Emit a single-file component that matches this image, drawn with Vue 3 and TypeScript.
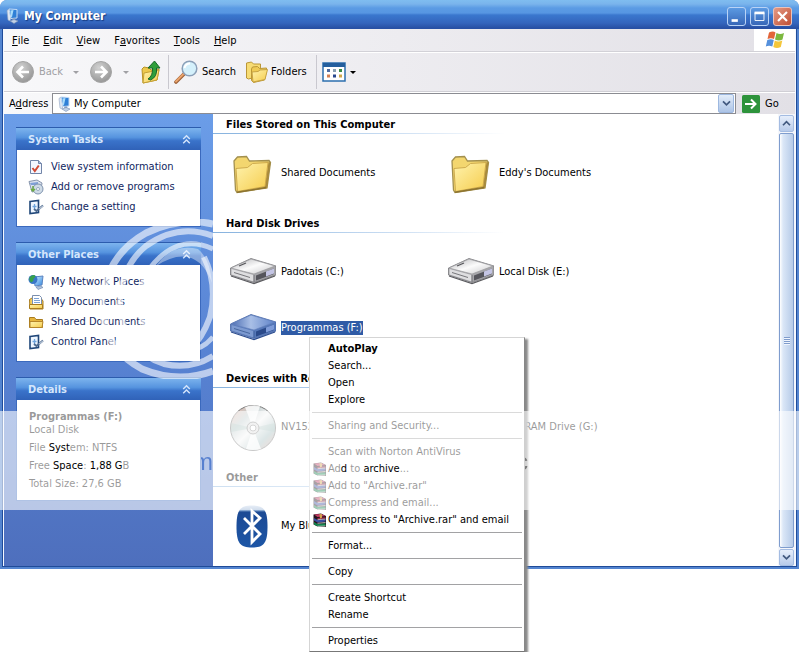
<script setup lang="ts">
import { ref } from 'vue'

interface Run { text: string; clear?: boolean }
interface TaskLink { label: string; icon: string }
interface TaskBox { title: string; links: TaskLink[] }
interface DriveItem { label: string; icon: string; selected?: boolean }
interface Group { title: string; items: DriveItem[] }
interface MenuEntry { runs: Run[]; bold?: boolean; icon?: boolean }

const menus = [
  ['', 'F', 'ile'],
  ['', 'E', 'dit'],
  ['', 'V', 'iew'],
  ['F', 'a', 'vorites'],
  ['', 'T', 'ools'],
  ['', 'H', 'elp'],
]

const address = ref('My Computer')

const boxes: TaskBox[] = [
  {
    title: 'System Tasks',
    links: [
      { label: 'View system information', icon: 'sysinfo' },
      { label: 'Add or remove programs', icon: 'programs' },
      { label: 'Change a setting', icon: 'panel' },
    ],
  },
  {
    title: 'Other Places',
    links: [
      { label: 'My Network Places', icon: 'network' },
      { label: 'My Documents', icon: 'mydocs' },
      { label: 'Shared Documents', icon: 'smallfolder' },
      { label: 'Control Panel', icon: 'panel' },
    ],
  },
]

const details: Run[][] = [
  [{ text: 'File ' }, { text: 'Syst', clear: true }, { text: 'em: NTFS' }],
  [{ text: 'Free ' }, { text: 'Space', clear: true }, { text: ': ' }, { text: '1,88 G', clear: true }, { text: 'B' }],
  [{ text: 'Total Size: 27,6 GB' }],
]

const groups: Group[] = [
  {
    title: 'Files Stored on This Computer',
    items: [
      { label: 'Shared Documents', icon: 'folder' },
      { label: "Eddy's Documents", icon: 'folder' },
    ],
  },
  {
    title: 'Hard Disk Drives',
    items: [
      { label: 'Padotais (C:)', icon: 'disk' },
      { label: 'Local Disk (E:)', icon: 'disk' },
      { label: 'Programmas (F:)', icon: 'diskblue', selected: true },
    ],
  },
  {
    title: 'Devices with Removable Storage',
    items: [
      { label: 'NV152 (D:)', icon: 'cd' },
      { label: 'DVD-RAM Drive (G:)', icon: 'cd' },
    ],
  },
  { title: 'Other', items: [{ label: 'My Bluetooth Places', icon: 'bluetooth' }] },
]

const contextMenu: MenuEntry[][] = [
  [
    { runs: [{ text: 'AutoPlay' }], bold: true },
    { runs: [{ text: 'Search...' }] },
    { runs: [{ text: 'Open' }] },
    { runs: [{ text: 'Explore' }] },
  ],
  [{ runs: [{ text: 'Sharing and Security...' }] }],
  [
    { runs: [{ text: 'Scan with Norton AntiVirus' }] },
    {
      runs: [{ text: 'Ad' }, { text: 'd', clear: true }, { text: ' to ' }, { text: 'archive', clear: true }, { text: '...' }],
      icon: true,
    },
    { runs: [{ text: 'Add to "Archive.rar"' }], icon: true },
    { runs: [{ text: 'Compress and email...' }], icon: true },
    { runs: [{ text: 'Compress to "Archive.rar" and email' }], icon: true },
  ],
  [{ runs: [{ text: 'Format...' }] }],
  [{ runs: [{ text: 'Copy' }] }],
  [{ runs: [{ text: 'Create Shortcut' }] }, { runs: [{ text: 'Rename' }] }],
  [{ runs: [{ text: 'Properties' }] }],
]
</script>

<template>
  <div class="desktop">
    <svg class="defs" width="0" height="0" aria-hidden="true">
      <defs>
        <linearGradient id="gy" x1="0" y1="0" x2="1" y2="1">
          <stop offset="0" stop-color="#fff3ae" /><stop offset="1" stop-color="#f5cc4c" />
        </linearGradient>
        <linearGradient id="gs" x1="0" y1="0" x2="1" y2="1">
          <stop offset="0" stop-color="#d8f1ff" /><stop offset="1" stop-color="#2f86e0" />
        </linearGradient>
        <linearGradient id="gt" x1="0" y1="0" x2="1" y2="1">
          <stop offset="0" stop-color="#b4b4b8" /><stop offset=".5" stop-color="#fbfbfb" /><stop offset="1" stop-color="#c9c9cc" />
        </linearGradient>
        <linearGradient id="gb" x1="0" y1="0" x2="1" y2="0">
          <stop offset="0" stop-color="#4a6cb2" /><stop offset=".45" stop-color="#a9bfe6" /><stop offset="1" stop-color="#5f83c9" />
        </linearGradient>
        <linearGradient id="gc" x1="0" y1="0" x2="1" y2="1">
          <stop offset="0" stop-color="#f0b5a4" /><stop offset=".3" stop-color="#c3cfd0" /><stop offset=".5" stop-color="#f4f4f4" />
          <stop offset=".75" stop-color="#a8c0c2" /><stop offset="1" stop-color="#e3a797" />
        </linearGradient>
        <radialGradient id="gg" cx=".4" cy=".3" r=".8">
          <stop offset="0" stop-color="#d2d2d2" /><stop offset="1" stop-color="#8f8f8f" />
        </radialGradient>
        <linearGradient id="gbt" x1="0" y1="0" x2="0" y2="1">
          <stop offset="0" stop-color="#c3d4ea" /><stop offset=".13" stop-color="#7fa0cc" /><stop offset=".15" stop-color="#1c4a94" /><stop offset="1" stop-color="#1d56a6" />
        </linearGradient>
      </defs>
      <symbol id="pc" viewBox="0 0 16 16">
        <path d="M3 2.500 5 1l2 9-1 3-2-1z" fill="#dde6f2" stroke="#8ea2c2" stroke-width=".6" />
        <path d="m5 1 8 .5V10l-6 .5z" fill="#2f7fd6" stroke="#c5dcf6" />
        <path d="M6.300 2.500 9.500 2 8 9l-.8.300z" fill="#a8dcfb" />
        <path d="M8.500 10.500h2.500l.5 2H8z" fill="#7f97bd" />
        <path d="m6 13 4-1.500 4 1.500-4 2.500z" fill="#c3d2e6" stroke="#7890b5" stroke-width=".6" />
      </symbol>
      <symbol id="sysinfo" viewBox="0 0 16 16">
        <path d="M2.500 1.500h8l3 3v10h-11z" fill="#f2f6ff" stroke="#7285a8" />
        <path d="M10.500 1.500v3h3" fill="#a9bcdc" stroke="#7285a8" />
        <path d="m4.500 9 2.300 3 4-5.500" fill="none" stroke="#d04a35" stroke-width="2" />
      </symbol>
      <symbol id="programs" viewBox="0 0 16 16">
        <path d="M1 2.500 9 1l5 3-1 7-9 2z" fill="#dbe3ef" stroke="#8795ad" />
        <path d="m2 4 8-1v3H3z" fill="#7f9fd6" />
        <circle cx="10" cy="10" r="5" fill="#cfdbe6" stroke="#7f93ae" />
        <circle cx="10" cy="10" r="1.500" fill="#fff" stroke="#66829f" stroke-width=".6" />
        <path d="M5 7v5m-2-2 2 2 2-2" fill="none" stroke="#6caa46" stroke-width="1.500" />
      </symbol>
      <symbol id="panel" viewBox="0 0 16 16">
        <path d="M2 2.500 10.500 1.500v12L2 14.500z" fill="#eef6ff" stroke="#1f4679" stroke-width="1.600" />
        <path d="M6.500 5v5M4.500 7.500h4" stroke="#6fa5dd" stroke-width="1.300" />
        <path d="m6 10 2.500 2L15 6.500" fill="none" stroke="#4e6a8e" stroke-width="2" />
        <path d="m11 10 4-3" stroke="#b7c4d5" stroke-width="1.200" />
      </symbol>
      <symbol id="network" viewBox="0 0 16 16">
        <path d="m6 3 9-1-1 9-7 1z" fill="url(#gs)" stroke="#5c84c0" />
        <path d="m8 13 5-1 2 1.500-5 2z" fill="#b0c3dd" stroke="#657fa8" stroke-width=".6" />
        <circle cx="5" cy="5.500" r="4.500" fill="#3976c9" />
        <path d="M1.500 3.500q2-3 5-2.500l1 2-2 1.500v2l-2 2q-3-2-2-5z" fill="#37a14a" />
      </symbol>
      <symbol id="mydocs" viewBox="0 0 16 16">
        <path d="M1.500 5.500 4 4l9.500 1 1.500 2v8h-13z" fill="#f4cf5f" stroke="#a97c1f" />
        <path d="M4.500 1.500h7l2 2v8h-9z" fill="#fff" stroke="#7b8fae" />
        <path d="M6 4.500h5m-5 2h6m-6 2h6" stroke="#7ea4d6" />
        <path d="M1.500 10.500h13v4h-13z" fill="url(#gy)" stroke="#a97c1f" />
      </symbol>
      <symbol id="smallfolder" viewBox="0 0 16 16">
        <path d="M1.500 13.500v-10h5l1.500 2h6.500v8z" fill="#e7b53d" stroke="#a97c1f" />
        <path d="M2 13.500v-6h13l-1 6z" fill="url(#gy)" stroke="#b6862a" />
      </symbol>
      <symbol id="folder" viewBox="0 0 48 48">
        <path d="M6 12 9.500 8 18.500 7.500 21.500 12 41 11.500l1.500 2L39 39 9 43.500 7.500 41z" fill="#f3d66f" stroke="#a3904f" stroke-width="1.300" />
        <path d="m40.500 13 2 .5L39 39l-2.500.5z" fill="#a88a3c" />
        <path d="M8 19.500 19.500 18.500 24.500 14.500 40 13.500 37 37.500 9.500 42.500z" fill="url(#gy)" stroke="#c9a547" stroke-width=".9" />
        <path d="M9 43.300 38 38.500" stroke="#8d7430" stroke-width="1.500" />
      </symbol>
      <symbol id="disk" viewBox="0 0 48 48">
        <path d="M2.500 20 23 10.500 48 18v9L26 34.500 2.500 27z" fill="#a6a6aa" stroke="#77777b" stroke-width=".8" />
        <path d="M3 20 23 11 47 18 26 26z" fill="url(#gt)" stroke="#99999c" stroke-width=".7" />
        <path d="m3.500 21 22 6v6.500l-22-7z" fill="#dedee0" /><path d="m6 24.500 16 5" stroke="#77777b" /><path d="M26 27v7" stroke="#66666a" stroke-width=".8" />
        <path d="m28 27.500 18-7v5.500l-18 6.500z" fill="#55555c" /><path d="m38 23.500 8-3v5l-8 3z" fill="#c4c5e4" />
        <path d="m11 18 7-3" stroke="#56565a" stroke-width="1.300" />
        <path d="M3 28 26 35.500 47 28" fill="none" stroke="#5c5c60" stroke-width="1.200" />
      </symbol>
      <symbol id="diskblue" viewBox="0 0 48 48">
        <path d="M2.500 20 23 10.500 48 18v9L26 34.500 2.500 27z" fill="#5678b8" stroke="#4a6aa8" stroke-width=".8" />
        <path d="M3 20 23 11 47 18 26 26z" fill="url(#gb)" stroke="#6583bd" stroke-width=".7" />
        <path d="m3.500 21 22 6v6.500l-22-7z" fill="#7d9ad0" /><path d="m6 24.500 16 5" stroke="#48689f" /><path d="M26 27v7" stroke="#3a5a98" stroke-width=".8" />
        <path d="m28 27.500 18-7v5.500l-18 6.500z" fill="#2b4a8a" /><path d="m38 23.500 8-3v5l-8 3z" fill="#7f9cd8" />
        <path d="M3 28 26 35.500 47 28" fill="none" stroke="#2f4f90" stroke-width="1.200" />
      </symbol>
      <symbol id="cd" viewBox="0 0 48 48">
        <circle cx="25" cy="25" r="22.500" fill="url(#gc)" stroke="#777" />
        <path d="M25 25 17 4q7-3 15-1zM25 25l8 21q-8 2-15 0z" fill="#fff" opacity=".8" />
        <path d="M25 25 3 20v9zM25 25l22-5v9z" fill="#8bb1a9" opacity=".4" />
        <circle cx="25" cy="25" r="6" fill="#dedede" stroke="#888" />
        <circle cx="25" cy="25" r="3" fill="#fff" stroke="#999" />
      </symbol>
      <symbol id="bluetooth" viewBox="0 0 48 48">
        <path d="M24 3.500C36 3.500 39.500 8 39.500 24.500S36 45.500 24 45.500 8.500 41 8.500 24.500 12 3.500 24 3.500z" fill="url(#gbt)" />
        <path d="m16 16 16 16-8 8V9l8 7-16 16" fill="none" stroke="#fff" stroke-width="2.800" />
      </symbol>
      <symbol id="rar" viewBox="0 0 14 14">
        <path d="M.5 1.500 8 .5l5 2.500v11L4.500 13.500.5 11.500z" fill="#26141c" />
        <path d="M1 1.500 8 1l4.500 2L4.500 4z" fill="#c23a64" />
        <path d="m4.500 5 8-.8v1.300l-8 .8z" fill="#a02448" /><path d="m1 5 3.500 2 8-.8v2.300l-8 1L1 7.500z" fill="#3a4ea4" />
        <path d="m1 9 3.500 2 8-.8V13l-8 .3L1 11.500z" fill="#12824c" />
        <path d="m4.500 6.700 8-.7M4.500 10.300l8-.8M4.500 13.300l8-.3" stroke="#e8e8e8" stroke-width=".7" />
        <path d="M6.500 1.200h2.500v3.500l-2 .8z" fill="#d5a64c" />
      </symbol>
    </svg>

    <main class="window">
      <header class="titlebar">
        <svg class="i16"><use href="#pc" /></svg>
        <h1>My Computer</h1>
        <button class="cap" aria-label="Minimize"><svg viewBox="0 0 19 19"><path d="M4 14h7" stroke="#fff" stroke-width="3" /></svg></button>
        <button class="cap" aria-label="Maximize"><svg viewBox="0 0 19 19"><path d="M4.500 5v9h10V5" fill="none" stroke="#fff" /><path d="M4 5.500h11" stroke="#fff" stroke-width="3" /></svg></button>
        <button class="cap close" aria-label="Close"><svg viewBox="0 0 19 19"><path d="m4.500 4.500 10 10m0-10-10 10" stroke="#fff" stroke-width="2.400" /></svg></button>
      </header>

      <div class="frame">
        <nav class="menubar">
          <button v-for="m in menus" :key="m.join('')">{{ m[0] }}<u>{{ m[1] }}</u>{{ m[2] }}</button>
          <span class="flag">
            <svg viewBox="0 0 20 18">
              <path d="M4 1.500Q8-.5 10.500 1.500L9 8Q6 6.500 2.500 8z" fill="#e2653a" />
              <path d="M11.500 2Q15 4 19 2l-1.500 6.500Q14 10.500 10 8.500z" fill="#7cb83e" />
              <path d="M2.300 9Q6 7.500 8.800 9l-1.500 6.500Q4 14 .8 15.500z" fill="#5590dc" />
              <path d="M9.800 9.500q3.500 2 7.500 0L15.800 16q-4 2-7.500 0z" fill="#f4c63a" />
            </svg>
          </span>
        </nav>

        <div class="toolbar">
          <button class="tool dim">
            <svg class="i24" viewBox="0 0 24 24"><circle cx="12" cy="12" r="10.500" fill="url(#gg)" stroke="#a5a5a5" /><path d="M18 12H7m5-5.500L6.500 12l5.500 5.500" fill="none" stroke="#fff" stroke-width="2.600" /></svg>
            Back
          </button>
          <button class="drop dim" aria-label="Back history"></button>
          <button class="tool" aria-label="Forward">
            <svg class="i24" viewBox="0 0 24 24"><circle cx="12" cy="12" r="10.500" fill="url(#gg)" stroke="#a5a5a5" /><path d="M6 12h11m-5-5.500 5.500 5.500-5.500 5.500" fill="none" stroke="#fff" stroke-width="2.600" /></svg>
          </button>
          <button class="drop dim" aria-label="Forward history"></button>
          <button class="tool" aria-label="Up">
            <svg class="i24" viewBox="0 0 24 24">
              <path d="m3 9 2-2 5 1 2 2 8-1-2 11-14 3z" fill="#edc94c" stroke="#b89428" /><path d="m5 13 15-3-2 10-14 3z" fill="url(#gy)" stroke="#c4a034" />
              <path d="M9 19q5-3 4.500-11H9l6.500-7L21 8h-3.500q1 9-6 12z" fill="#2f9e3a" stroke="#17662a" />
            </svg>
          </button>
          <span class="rule"></span>
          <button class="tool">
            <svg class="i24" viewBox="0 0 24 24">
              <path d="m2 22 8-8" stroke="#9a5f36" stroke-width="3.600" stroke-linecap="round" /><path d="m2 21.500 8-8" stroke="#eaa36c" stroke-width="2" stroke-linecap="round" />
              <circle cx="15.500" cy="8.500" r="7.300" fill="#d4f0fb" stroke="#8b9fb8" stroke-width="1.500" /><path d="M10.500 8q1-4.500 5.500-4.500" fill="none" stroke="#fff" stroke-width="2" />
            </svg>
            Search
          </button>
          <button class="tool folders">
            <svg class="i24" viewBox="0 0 24 24">
              <path d="M1.500 18V3l5-1 2 2h7v3l-1 9-11 3z" fill="#f7dc74" stroke="#bb9737" />
              <path d="m6.500 9 1-2 5-.5 2 2 7-.5v3l-2 9-11 2.500-2-2z" fill="#efcb55" stroke="#bb9737" /><path d="m7 12 6-.5 2-1.500 7.500-.5-2.500 10-12 2.500z" fill="url(#gy)" stroke="#c7a343" />
            </svg>
            Folders
          </button>
          <span class="rule"></span>
          <button class="tool views" aria-label="Views">
            <svg class="i24" viewBox="0 0 24 20">
              <path d="M1 1h22v18H1z" fill="#fff" stroke="#2d6fae" stroke-width="1.500" /><path d="M1 1h22v4H1z" fill="#245f9e" />
              <g stroke-width="3"><path d="M5 8.500h3" stroke="#4e6ba0" /><path d="M11 8.500h3" stroke="#8aa1b4" /><path d="M17 8.500h3" stroke="#3b8a44" /><path d="M5 14h3" stroke="#d37f53" /><path d="M11 14h3" stroke="#27468d" /><path d="M17 14h3" stroke="#d0a64b" /></g>
            </svg>
            <span class="drop"></span>
          </button>
        </div>

        <form class="addressbar" @submit.prevent>
          <label for="address">A<u>d</u>dress</label>
          <div class="field">
            <svg class="i16"><use href="#pc" /></svg>
            <input id="address" v-model="address" type="text" />
            <button type="button" class="combo" aria-label="Show addresses"><svg viewBox="0 0 10 8"><path d="m1 1.500 4 4 4-4" fill="none" stroke="#42597f" stroke-width="2" /></svg></button>
          </div>
          <button class="go">
            <svg viewBox="0 0 18 18"><rect width="18" height="18" rx="1.500" fill="#2d933b" /><path d="M3 9h10M9 4.500 13.500 9 9 13.500" fill="none" stroke="#fff" stroke-width="2" /></svg>
            Go
          </button>
        </form>

        <div class="body">
          <aside class="tasks">
            <section v-for="box in boxes" :key="box.title" class="box">
              <h2>{{ box.title }}<svg viewBox="0 0 10 10"><path d="m2 4.500 3-3 3 3M2 8.500l3-3 3 3" fill="none" stroke="#d4e5fc" stroke-width="1.300" /></svg></h2>
              <ul>
                <li v-for="link in box.links" :key="link.label">
                  <a href="#"><svg class="i16"><use :href="'#' + link.icon" /></svg>{{ link.label }}</a>
                </li>
              </ul>
            </section>
            <section class="box">
              <h2>Details<svg viewBox="0 0 10 10"><path d="m2 4.500 3-3 3 3M2 8.500l3-3 3 3" fill="none" stroke="#d4e5fc" stroke-width="1.300" /></svg></h2>
              <div class="details">
                <strong>Programmas (F:)</strong>
                <span>Local Disk</span>
                <p v-for="(line, n) in details" :key="n"><span v-for="(r, k) in line" :key="k" :class="{ clear: r.clear }">{{ r.text }}</span></p>
              </div>
            </section>
          </aside>

          <div class="pane">
            <section v-for="g in groups" :key="g.title">
              <h3>{{ g.title }}</h3>
              <div class="items">
                <a v-for="item in g.items" :key="item.label" href="#" class="item" :class="{ selected: item.selected }">
                  <svg><use :href="'#' + item.icon" /></svg><span>{{ item.label }}</span>
                </a>
              </div>
            </section>
          </div>

          <div class="scroll">
            <button aria-label="Scroll up"><svg viewBox="0 0 10 8"><path d="m1 6 4-4 4 4" fill="none" stroke="#42597f" stroke-width="2" /></svg></button>
            <div class="thumb"><i></i></div>
            <button aria-label="Scroll down"><svg viewBox="0 0 10 8"><path d="m1 1.500 4 4 4-4" fill="none" stroke="#42597f" stroke-width="2" /></svg></button>
          </div>
        </div>
      </div>
    </main>

    <div class="context" role="menu">
      <div v-for="(block, n) in contextMenu" :key="n" class="block">
        <button v-for="(e, k) in block" :key="k" role="menuitem" :class="{ bold: e.bold }">
          <span class="slot"><svg v-if="e.icon"><use href="#rar" /></svg></span>
          <span v-for="(r, j) in e.runs" :key="j" :class="{ clear: r.clear }">{{ r.text }}</span>
        </button>
      </div>
    </div>

    <svg class="rings" viewBox="0 0 113 160" aria-hidden="true">
      <g fill="none" stroke="#fff" stroke-opacity=".6">
        <path d="M113 5Q80-2 46 14 8 35 2 80q-1 48 40 70 36 15 71 2" stroke-width="7" />
        <path d="M113 17Q78 4 46 27 20 48 20 88q4 44 44 57 27 6 49-8" stroke-width="6" />
        <path d="M113 30Q83 16 59 39 33 63 42 101q13 34 46 31 15-2 25-14" stroke-width="5" />
        <path d="M104 38q14 28 6 60-8 22-20 32" stroke-width="6" />
      </g>
      <path d="M56 47Q72 24 98 30q12 10 14 34-8-22-24-26-14-3-32 9z" fill="#fff" fill-opacity=".4" />
    </svg>
    <div class="band" aria-hidden="true"><span class="letter-m">m</span><span class="letter-c">c</span></div>
  </div>
</template>

<style>
body { margin: 0; background: #fff; }
</style>

<style scoped>
* { box-sizing: border-box; }
.desktop { position: relative; min-height: 100vh; overflow: hidden; font: 11px/14px "DejaVu Sans Condensed", "DejaVu Sans", sans-serif; font-stretch: condensed; color: #000; background: #fff; }
.defs { position: absolute; }
button { border: 0; padding: 0; background: none; font: inherit; color: inherit; display: flex; align-items: center; white-space: nowrap; }
a { color: inherit; text-decoration: none; }
h1, h2, h3, p, ul { margin: 0; padding: 0; }
svg { flex: none; }
.i16 { width: 16px; height: 16px; }
.i24 { width: 24px; height: 24px; }
.clear { position: relative; z-index: 6; }

.window { border-radius: 7px 7px 0 0; overflow: hidden; padding-bottom: 2px; background: #5485d0; }
.titlebar { height: 29px; display: flex; align-items: center; gap: 4px; padding: 3px 7px 0 4px; background: linear-gradient(#7fbdf0 0, #7ab4ec 4px, #5b9be4 8px, #5796e2 13px, #3a77ce 15px, #3465bd 23px, #2850a4 28px); }
.titlebar h1 { flex: 1; font-size: 12px; line-height: 16px; font-weight: bold; color: #fff; text-shadow: 1px 1px 1px #173a80; }
.cap { width: 19px; height: 19px; border: 1px solid #b9d3f6; border-radius: 3px; background: linear-gradient(#5c9ae2, #3767b8); }
.cap svg { width: 17px; height: 17px; }
.cap.close { background: linear-gradient(135deg, #e39a85, #c14e33); border-color: #e9c2bb; }
.frame { margin: 0 2px; padding: 0 1px; border: solid #1f4b99; border-width: 0 1px 1px; background: #f4f8ff; }

.menubar { height: 23px; display: flex; padding-left: 1px; background: linear-gradient(90deg, #f8f8fa, #e2e0e6); border-bottom: 1px solid #d2d1d7; }
.menubar button { padding: 1px 7px 0; }
.menubar .flag { margin-left: auto; width: 41px; background: #fff; display: flex; align-items: center; justify-content: center; }
.flag svg { width: 20px; height: 18px; }
.toolbar { height: 40px; display: flex; align-items: center; padding-left: 7px; background: linear-gradient(90deg, #f8f8fa, #e2e0e6); border-top: 1px solid #fff; border-bottom: 1px solid #d0cfd5; }
.tool { gap: 4px; }
.dim { color: #a0a0a4; }
.drop { width: 26px; justify-content: center; }
.drop::before { content: ""; border: 3px solid transparent; border-top-color: currentColor; border-bottom: 0; }
.rule { width: 1px; align-self: stretch; background: #c9c8cf; margin: 2px 5px; }
.folders { gap: 2px; margin: 0 4px 0 9px; }
.views .i24 { height: 20px; }
.views .drop { width: 6px; display: flex; }

.addressbar { height: 22px; display: flex; align-items: stretch; background: linear-gradient(90deg, #f8f8fa, #e2e0e6); border-top: 1px solid #fff; }
.addressbar label { width: 48px; padding-left: 5px; align-self: center; }
.field { flex: 1; display: flex; align-items: center; gap: 2px; padding: 0 1px 0 3px; background: #fff; border: 1px solid #8b8c92; }
.field input { flex: 1; min-width: 0; border: 0; padding: 1px 0 0; outline: 0; font: inherit; background: none; }
.combo { width: 16px; height: 19px; border: 1px solid #9db8e0; border-radius: 2px; background: linear-gradient(#e3edfa, #adc4e6); justify-content: center; }
.combo svg, .scroll svg { width: 9px; height: 7px; }
.go { gap: 5px; width: 59px; padding-left: 6px; }
.go svg { width: 18px; height: 18px; }

.body { display: flex; }
.tasks { flex: none; width: 209px; padding: 13px 12px; display: flex; flex-direction: column; gap: 15px; background: linear-gradient(#6b9de8, #5782d2 55%, #4e6fbd); }
.box { background: #fff; border: 1px solid #3b69bd; border-top: 0; }
.box h2 { height: 23px; display: flex; align-items: center; justify-content: space-between; padding: 2px 9px 0 12px; margin: 0 -1px; font-size: 11px; color: #d4e6fc; background: linear-gradient(#2c5cad 0, #2c5cad 1px, #7db4ee 1px, #5694df 45%, #3a73ca 60%, #3062b8); }
.box h2 svg { width: 11px; height: 11px; }
.box ul { list-style: none; padding: 7px 11px 9px; }
.box a { display: flex; align-items: center; gap: 7px; height: 20px; color: #10265f; white-space: nowrap; }
.details { padding: 10px 12px 10px; display: flex; flex-direction: column; line-height: 13px; }
.details strong { font-size: 11px; }
.details p { padding-top: 5px; white-space: pre; }

.pane { flex: 1; min-width: 0; background: #fff; }
.pane h3 { height: 20px; padding: 4px 13px 0; font-size: 11px; line-height: 14px; white-space: nowrap; background: linear-gradient(90deg, #86b2de, #c8dcf2 60%, #fff) left bottom / 292px 1px no-repeat; }
.items { display: grid; grid-template-columns: repeat(auto-fill, 218px); grid-auto-rows: 56px; padding: 11px 0 12px 15px; }
.item { display: flex; align-items: center; gap: 5px; white-space: nowrap; }
.item svg { width: 48px; height: 48px; }
.selected span { background: #2f5ba6; color: #fff; }

.scroll { width: 17px; display: flex; flex-direction: column; gap: 1px; padding: 1px 1px 0; background: #f4f6fb; }
.scroll button { height: 17px; border: 1px solid #a4bce2; border-radius: 2px; background: linear-gradient(#e6eefb, #b8cbea); justify-content: center; }
.thumb { flex: 1; display: flex; align-items: center; justify-content: center; border: 1px solid #7f9dce; border-radius: 2px; background: linear-gradient(90deg, #fff 0, #dbe7f7 3px, #b5cae8); }
.thumb i { width: 6px; height: 8px; background: repeating-linear-gradient(#7f9ccc 0 1px, #eef4fd 1px 2px); }

.context { position: absolute; left: 309px; top: 337px; width: 216px; padding: 2px; background: #fff; border: 1px solid #d5d5d5; border-right-color: #888; border-bottom-color: #777; box-shadow: 3px 2px 2px #8a8a8a; }
.block + .block { margin-top: 4px; padding-top: 4px; border-top: 1px solid #a2a2a4; }
.context button { height: 17px; width: 100%; white-space: pre; }
.slot { width: 16px; height: 14px; display: flex; justify-content: center; }
.slot svg { width: 14px; height: 14px; }
.bold { font-weight: bold; }

.rings { position: absolute; left: 100px; top: 219px; width: 113px; height: 160px; z-index: 4; pointer-events: none; }
.band { position: absolute; left: 0; right: 0; top: 411px; height: 99px; background: rgba(255, 255, 255, .6); z-index: 5; pointer-events: none; }
.band span { position: absolute; font: 24px/30px "Liberation Sans", sans-serif; color: transparent; background-clip: text; }
.letter-m { left: 193px; top: 36px; background-image: linear-gradient(90deg, transparent 8px, #5780cf 8px); }
.letter-c { left: 516px; top: 36px; background-image: linear-gradient(90deg, transparent 9px, #777 9px); }
</style>
